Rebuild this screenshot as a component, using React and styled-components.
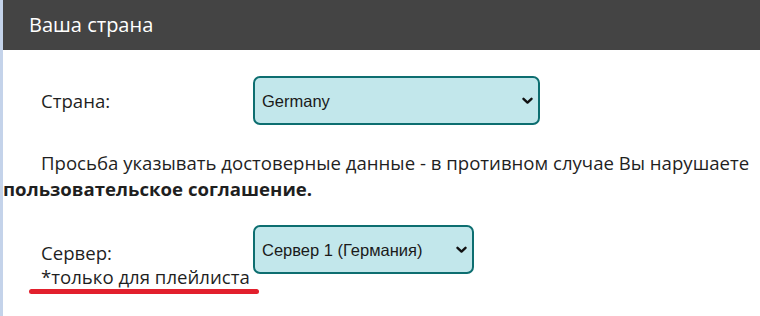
import React from "react";
import styled, { createGlobalStyle } from "styled-components";

const Global = createGlobalStyle`
  html, body { margin: 0; padding: 0; background: #fff; }
  body { font-family: "Open Sans", "Noto Sans", sans-serif; color: #1f1f1f; }
`;

const Page = styled.div`
  width: 760px;
  height: 316px;
  box-sizing: border-box;
  border-left: 3px solid #c4d3ea;
  overflow: hidden;
`;

const Header = styled.div`
  height: 50px;
  background: #444444;
  color: #ffffff;
  font-size: 20px;
  line-height: 50px;
  padding-left: 26px;
`;

const Row = styled.div`
  display: flex;
  align-items: ${(p) => p.$align || "center"};
  margin-top: ${(p) => p.$top}px;
`;

const Label = styled.div`
  width: 250px;
  flex: none;
  padding-left: 38px;
  box-sizing: border-box;
  font-size: 18.6px;
  line-height: 24px;
  white-space: nowrap;
  padding-top: ${(p) => p.$pt || 0}px;
`;

const SelectWrap = styled.div`
  position: relative;
  width: ${(p) => p.$w}px;
  height: 49px;
`;

const Select = styled.select`
  appearance: none;
  -webkit-appearance: none;
  width: 100%;
  height: 100%;
  box-sizing: border-box;
  border: 2px solid #0d6e70;
  border-radius: 7px;
  background: #c2e7eb;
  font-family: "Liberation Sans", Arial, sans-serif;
  font-size: 16.5px;
  color: #1a1a1a;
  padding-left: 7px;
  outline: none;
`;

const Chevron = styled.svg`
  position: absolute;
  right: ${(p) => p.$r}px;
  top: 21px;
  width: 11px;
  height: 8px;
  pointer-events: none;
`;

const Notice = styled.p`
  margin: 25px 0 0;
  font-size: 18.6px;
  line-height: 26px;
  text-indent: 38px;
`;

const Strong = styled.b`
  font-weight: 700;
`;

const Note = styled.span`
  position: relative;
  display: inline-block;
  &::after {
    content: "";
    position: absolute;
    left: -12px;
    right: -9px;
    bottom: -5px;
    height: 5px;
    border-radius: 3px;
    background: #e2202d;
  }
`;

const Arrow = ({ r }) => (
  <Chevron $r={r} viewBox="0 0 11 8">
    <path d="M1.5 1.8 L5.5 5.6 L9.5 1.8" fill="none" stroke="#111" strokeWidth="2.4" strokeLinecap="round" strokeLinejoin="round" />
  </Chevron>
);

export default function App() {
  return (
    <Page>
      <Global />
      <Header>Ваша страна</Header>
      <Row $top={26}>
        <Label>Страна:</Label>
        <SelectWrap $w={287}>
          <Select defaultValue="de">
            <option value="de">Germany</option>
          </Select>
          <Arrow r={7} />
        </SelectWrap>
      </Row>
      <Notice>
        Просьба указывать достоверные данные - в противном случае Вы нарушаете{" "}
        <Strong>пользовательское соглашение.</Strong>
      </Notice>
      <Row $top={23} $align="flex-start">
        <Label $pt={16}>
          Сервер:
          <br />
          <Note>*только для плейлиста</Note>
        </Label>
        <SelectWrap $w={221}>
          <Select defaultValue="1">
            <option value="1">Сервер 1 (Германия)</option>
          </Select>
          <Arrow r={7} />
        </SelectWrap>
      </Row>
    </Page>
  );
}
